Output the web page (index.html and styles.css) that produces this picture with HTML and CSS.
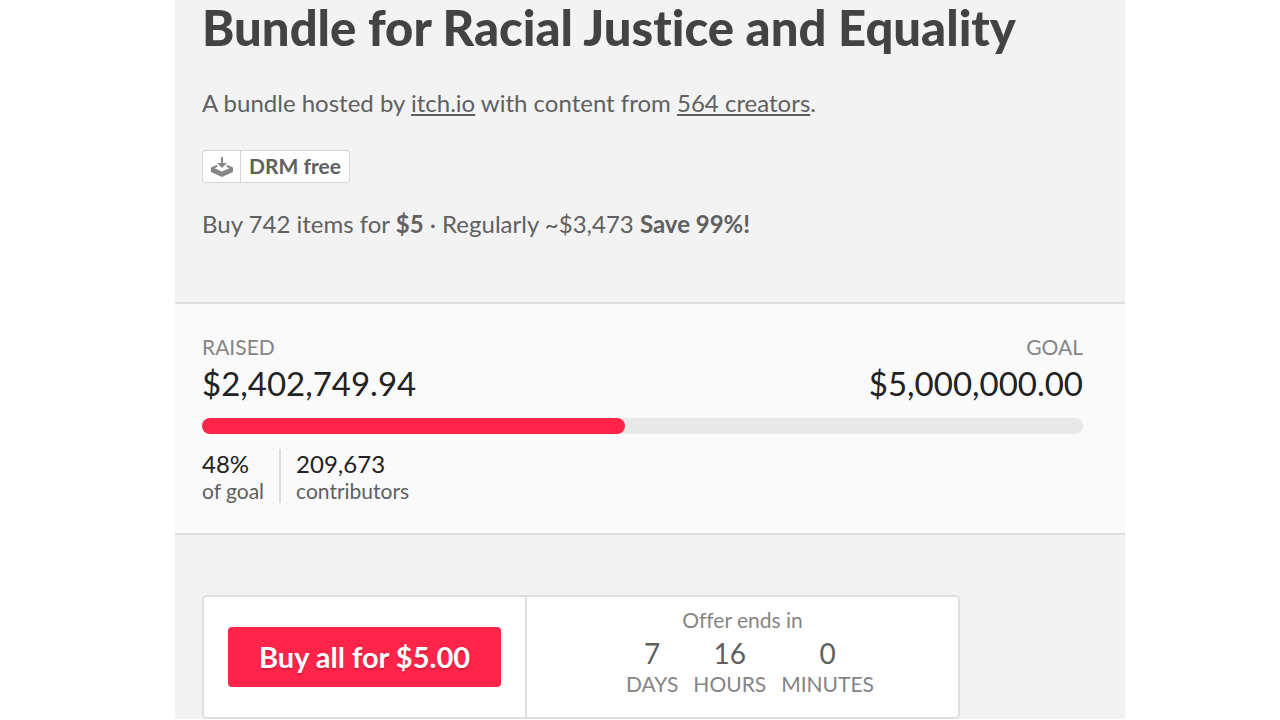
FILE: index.html
```html
<!DOCTYPE html>
<html lang="en">
<head>
<meta charset="utf-8">
<meta name="viewport" content="width=device-width, initial-scale=1">
<title>Bundle for Racial Justice and Equality</title>
<link rel="stylesheet" href="styles.css">
</head>
<body>
<main class="page">
  <header class="intro">
    <h1 class="title">Bundle for Racial Justice and Equality</h1>
    <p class="hosted">A bundle hosted by <a href="#">itch.io</a> with content from <a href="#">564 creators</a>.</p>
    <div class="badge">
      <span class="badge-icon">
        <svg width="22" height="20" viewBox="0 0 22 20" aria-hidden="true"><path d="M10 0h2v6h4l-5 5-5-5h4zM5.500 8L0 10.500V15l11 5 11-5v-4.500L16.500 8l-1.500 1.500 3.500 1.800L11 14.500l-7.500-3.200L7 9.500z" fill="#858585"/></svg>
      </span>
      <span class="badge-label">DRM free</span>
    </div>
    <p class="deal">Buy 742 items for <strong>$5</strong> · Regularly ~$3,473 <strong>Save 99%!</strong></p>
  </header>
  <section class="progress">
    <div class="totals">
      <div><div class="label">RAISED</div><div class="amount">$2,402,749.94</div></div>
      <div class="goal"><div class="label">GOAL</div><div class="amount">$5,000,000.00</div></div>
    </div>
    <div class="bar"><div class="bar-fill" style="width:48%"></div></div>
    <div class="stats">
      <div class="stat"><div class="stat-value">48%</div><div class="stat-label">of goal</div></div>
      <div class="stat"><div class="stat-value">209,673</div><div class="stat-label">contributors</div></div>
    </div>
  </section>
  <section class="purchase">
    <div class="offer">
      <div class="buy"><button class="buy-button" type="button">Buy all for $5.00</button></div>
      <div class="countdown">
        <div class="ends">Offer ends in</div>
        <div class="units">
          <div><div class="unit-value">7</div><div class="unit-label">DAYS</div></div>
          <div><div class="unit-value">16</div><div class="unit-label">HOURS</div></div>
          <div><div class="unit-value">0</div><div class="unit-label">MINUTES</div></div>
        </div>
      </div>
    </div>
  </section>
</main>
</body>
</html>
```
FILE: styles.css
```css
* { box-sizing: border-box; }
body { margin: 0; padding-left: 20px; background: #fff; color: #606060; font: 24px/32px Lato, sans-serif; font-variant-ligatures: none; }
.page { max-width: 950px; margin: 0 auto; background: #f3f3f3; }
.intro { padding: 0 27px 62px; }
.title { margin: 0; color: #434343; font-size: 49px; line-height: 54px; font-weight: 900; }
.hosted { margin: 33px 0 31px; }
.hosted a { color: inherit; }
.badge { display: inline-flex; height: 33px; border: 1px solid #d4d4d4; border-radius: 3px; background: #fff; vertical-align: top; }
.badge-icon { display: flex; align-items: center; padding: 0 7px 0 8px; border-right: 1px solid #d4d4d4; }
.badge-label { padding: 0 8px; font-size: 21px; line-height: 30px; font-weight: 700; }
.deal { margin: 25px 0 0; }
.progress { padding: 29px 42px 30px 27px; background: #fafafa; border-top: 2px solid #dedede; border-bottom: 2px solid #dedede; }
.totals { display: flex; justify-content: space-between; }
.goal { text-align: right; }
.label { color: #858585; font-size: 21px; line-height: 28px; }
.amount { color: #222; font-size: 33px; line-height: 44px; }
.bar { height: 16px; margin-top: 13px; border-radius: 8px; background: #e8e8e8; }
.bar-fill { height: 100%; border-radius: 8px; background: #ff2449; }
.stats { display: flex; margin-top: 15px; }
.stat + .stat { margin-left: 15px; padding-left: 15px; border-left: 2px solid #dedede; }
.stat-value { color: #222; line-height: 30px; }
.stat-label { font-size: 21px; line-height: 24px; }
.purchase { padding: 60px 27px 0; }
.offer { display: flex; max-width: 758px; height: 124px; background: #fff; border: 2px solid #dedede; border-radius: 5px; }
.buy { display: flex; align-items: center; padding: 0 24px; border-right: 2px solid #dedede; }
.buy-button { width: 273px; height: 60px; padding: 0; border: 0; border-radius: 4px; background: #ff2449; color: #fff; font: 700 29px/36px Lato, sans-serif; text-shadow: 0 2px 1px #d61d3c; }
.countdown { flex: 1; padding-top: 9px; text-align: center; }
.ends { font-size: 21px; line-height: 28px; color: #858585; }
.units { display: flex; justify-content: center; gap: 15px; padding-left: 15px; }
.unit-value { font-size: 28px; line-height: 38px; }
.unit-label { color: #858585; font-size: 21px; line-height: 24px; }
```
